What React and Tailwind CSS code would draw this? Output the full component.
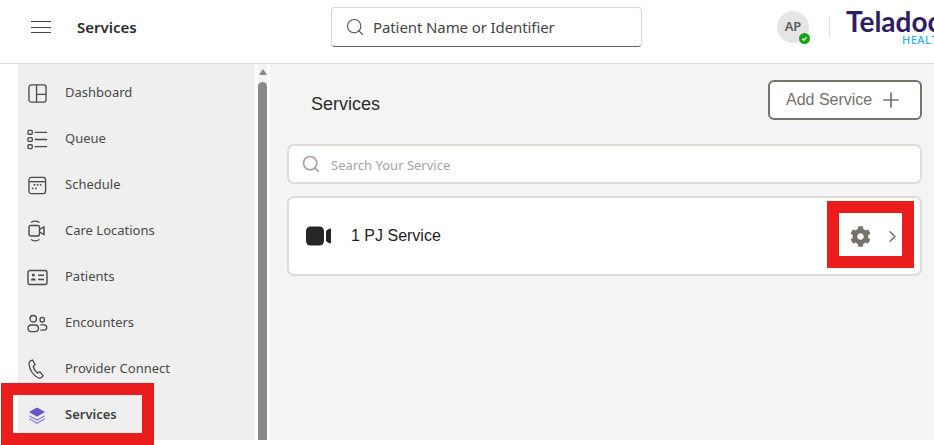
import { Search, Plus, ChevronRight } from "lucide-react";
import { FaCog } from "react-icons/fa";

const stroke = "#4a4a4a";

function Dashboard() {
  return (
    <svg width="19" height="19" viewBox="0 0 20 20" fill="none" stroke={stroke} strokeWidth="1.4">
      <rect x="1" y="1" width="18" height="18" rx="2.5" />
      <path d="M9 1v18M9 11h10" />
    </svg>
  );
}

function QueueIcon() {
  return (
    <svg width="21" height="21" viewBox="0 0 22 22" fill="none" stroke={stroke} strokeWidth="1.4">
      <rect x="1" y="1.5" width="4.5" height="4" rx="1" />
      <rect x="1" y="9" width="4.5" height="4" rx="1" />
      <rect x="1" y="16.5" width="4.5" height="4" rx="1" />
      <path d="M8 3.5h13M8 11h13M8 18.5h13" />
    </svg>
  );
}

function ScheduleIcon() {
  return (
    <svg width="19" height="19" viewBox="0 0 20 20" fill="none" stroke={stroke} strokeWidth="1.4">
      <rect x="1" y="1.5" width="17.5" height="17" rx="2.5" />
      <path d="M1 6h17.5" />
      <g fill={stroke} stroke="none">
        <rect x="6" y="8.5" width="1.7" height="1.7" />
        <rect x="9.2" y="8.5" width="1.7" height="1.7" />
        <rect x="12.4" y="8.5" width="1.7" height="1.7" />
        <rect x="4" y="12.2" width="1.7" height="1.7" />
        <rect x="7.4" y="12.2" width="1.7" height="1.7" />
      </g>
    </svg>
  );
}

function CareIcon() {
  return (
    <svg width="18" height="22" viewBox="0 0 18 22" fill="none" stroke={stroke} strokeWidth="1.4">
      <rect x="1" y="5.5" width="10.5" height="10.5" rx="2" />
      <path d="M11.5 9.5l4.5-2.5v7.5l-4.500-2.500" />
      <path d="M3 2.500c2.500-1.600 6-1.600 8.500 0M3 19.500c2.500 1.600 6 1.600 8.500 0" />
    </svg>
  );
}

function PatientsIcon() {
  return (
    <svg width="21" height="17" viewBox="0 0 21 17" fill="none" stroke={stroke} strokeWidth="1.4">
      <rect x="1" y="1.5" width="19" height="14" rx="2" />
      <circle cx="6.3" cy="6" r="1.5" fill={stroke} stroke="none" />
      <path d="M3.800 11.500c0-3 5-3 5 0z" fill={stroke} stroke="none" />
      <path d="M11 6.300h6M11 10.500h6" />
    </svg>
  );
}

function EncountersIcon() {
  return (
    <svg width="21" height="19" viewBox="0 0 22 20" fill="none" stroke={stroke} strokeWidth="1.4">
      <circle cx="6.5" cy="5" r="3.4" />
      <circle cx="16" cy="6" r="2.4" />
      <path d="M1 15c0-2.200 1.600-3.400 3.500-3.400h4c2 0 3.500 1.300 3.500 3.400s-1.500 3.500-3.500 3.500h-4C2.600 18.500 1 17.200 1 15z" />
      <path d="M14 11.500h3.500c1.800 0 3.200 1 3.200 2.700s-1.400 2.800-3.200 2.800H14" />
    </svg>
  );
}

function PhoneIcon() {
  return (
    <svg width="18" height="22" viewBox="0 0 18 20" fill="none" stroke={stroke} strokeWidth="1.3">
      <path d="M2 2.200L4.600 1l2.500 4.600-1.800 1.700c.5 2.600 2 5 4.300 6.600l2.300-1 3.200 3.800-2 2c-.8.600-1.800.600-2.700.3C5.600 17 1.500 11 1 5c-.1-1.100.2-2.200 1-2.800z" />
    </svg>
  );
}

function LayersIcon() {
  return (
    <svg width="18" height="19" viewBox="0 0 18 18" fill="none">
      <path d="M9 1l8 4.600-8 4.600-8-4.600z" fill="#6a55c4" />
      <path d="M1.200 9.200L9 13.500l7.800-4.300M1.200 12.300L9 16.800l7.800-4.500" stroke="#8d7cd6" strokeWidth="1.200" />
    </svg>
  );
}

function VideoIcon() {
  return (
    <svg width="26" height="20" viewBox="0 0 26 20" fill="#262626">
      <rect x="0" y="0.500" width="18" height="19" rx="4.500" />
      <path d="M20 5.500c0-.6.300-1 .8-1.300l2.500-1.500c.8-.4 1.700.1 1.700 1v12.600c0 .9-.9 1.400-1.700 1l-2.500-1.500c-.5-.3-.8-.7-.8-1.300z" />
    </svg>
  );
}

const navItems = [
  { label: "Dashboard", icon: <Dashboard /> },
  { label: "Queue", icon: <QueueIcon /> },
  { label: "Schedule", icon: <ScheduleIcon /> },
  { label: "Care Locations", icon: <CareIcon /> },
  { label: "Patients", icon: <PatientsIcon /> },
  { label: "Encounters", icon: <EncountersIcon /> },
  { label: "Provider Connect", icon: <PhoneIcon /> },
  { label: "Services", icon: <LayersIcon />, active: true },
];

function NavRow({ item }) {
  return (
    <div className="flex h-[46px] items-center">
      <div className="flex w-[47px] shrink-0 justify-center pr-[9px]">{item.icon}</div>
      <span className={item.active ? "text-[13px] font-semibold text-[#3f3f3f]" : "text-[13px] text-[#4a4a4a]"}>
        {item.label}
      </span>
    </div>
  );
}

export default function App() {
  return (
    <div className="relative flex h-[445px] w-[934px] flex-col overflow-hidden bg-white font-['Noto_Sans',sans-serif]">
      <header className="flex h-[64px] shrink-0 items-center overflow-hidden border-b border-[#dcdcdc] bg-white pb-[9px]">
        <div className="ml-[31px] flex w-[20px] shrink-0 flex-col gap-[4.500px]">
          <div className="h-px bg-[#444]" />
          <div className="h-px bg-[#444]" />
          <div className="h-px bg-[#444]" />
        </div>
        <div className="ml-[26px] w-[254px] shrink-0 text-[15px] font-semibold text-[#2b2b2b]">Services</div>
        <div className="flex h-[40px] w-[311px] shrink-0 items-center rounded-[4px] border border-[#d6d6d6] border-b-[#666] bg-white pl-[13px]">
          <Search size={20} strokeWidth={1.400} color="#555" />
          <span className="ml-[8px] text-[15px] tracking-[-0.1px] text-[#444]">Patient Name or Identifier</span>
        </div>
        <div className="relative ml-[135px] flex h-[32px] w-[32px] shrink-0 items-center justify-center rounded-full bg-[#e5e5e5] text-[13px] font-semibold text-[#5a5a5a]">
          AP
          <div className="absolute right-[-1px] bottom-[-1px] flex h-[11px] w-[11px] items-center justify-center rounded-full bg-[#14a314]">
            <svg width="7" height="7" viewBox="0 0 8 8" fill="none" stroke="white" strokeWidth="1.400">
              <path d="M1.500 4.200l1.800 1.800 3.200-3.600" />
            </svg>
          </div>
        </div>
        <div className="ml-[20px] h-[20px] w-px shrink-0 bg-[#ddd]" />
        <div className="ml-[16px] flex w-[90px] shrink-0 flex-col overflow-hidden">
          <span className="font-['Lato',sans-serif] text-[28px] leading-[26px] font-bold whitespace-nowrap text-[#2f1d63]">
            Teladoc
          </span>
          <span className="ml-[56px] text-[11px] leading-[12px] font-medium tracking-[0.5px] whitespace-nowrap text-[#27b5e8]">
            HEALTH
          </span>
        </div>
      </header>

      <div className="flex h-[376px] shrink-0">
        <aside className="ml-[18px] flex w-[237px] shrink-0 flex-col bg-[#efefef] pt-[6px]">
          {navItems.map((item) => (
            <NavRow key={item.label} item={item} />
          ))}
        </aside>
        <div className="ml-[3px] flex w-[9px] shrink-0 flex-col items-center bg-[#f4f4f4]">
          <div className="mt-[5px] h-0 w-0 border-x-[4.500px] border-b-[6px] border-x-transparent border-b-[#8a8a8a]" />
          <div className="mt-[7px] w-full flex-1 rounded-t-full bg-[#8a8a8a]" />
        </div>
        <main className="ml-[3px] flex-1 bg-[#f4f4f4] pr-[12px] pl-[17px]">
          <div className="flex h-[72px] items-start justify-between pl-[24px]">
            <h1 className="mt-[27px] font-['Liberation_Sans',sans-serif] text-[18px] text-[#2b2b2b]">Services</h1>
            <div className="mt-[16px] flex h-[40px] w-[154px] items-center rounded-[6px] border-2 border-[#77716c] bg-white pl-[16px] font-['Liberation_Sans',sans-serif] text-[16px] text-[#77716c]">
              Add Service
              <Plus size={24} strokeWidth={1.700} className="ml-[7px]" />
            </div>
          </div>
          <div className="mt-[8px] flex h-[40px] items-center rounded-[7px] border-2 border-[#e0dcd8] bg-white pl-[12px]">
            <Search size={20} strokeWidth={2} color="#a8a29e" />
            <span className="ml-[10px] pt-[3px] text-[13px] text-[#a8a29e]">Search Your Service</span>
          </div>
          <div className="mt-[12px] flex h-[80px] items-center rounded-[7px] border-2 border-[#e0dcd8] bg-white pr-[18px] pl-[17px]">
            <VideoIcon />
            <span className="ml-[19px] flex-1 font-['Liberation_Sans',sans-serif] text-[16px] text-[#222]">1 PJ Service</span>
            <FaCog size={21} color="#77716c" />
            <ChevronRight size={19} strokeWidth={2} color="#77716c" className="ml-[12px]" />
          </div>
        </main>
      </div>

      {/* red annotation boxes drawn on top of the screenshot */}
      <div className="absolute top-[383px] left-px h-[62px] w-[153px] border-[12px] border-[#ea1c1c]" />
      <div className="absolute top-[201px] left-[827px] h-[67px] w-[87px] border-[12px] border-[#ea1c1c]" />
    </div>
  );
}
